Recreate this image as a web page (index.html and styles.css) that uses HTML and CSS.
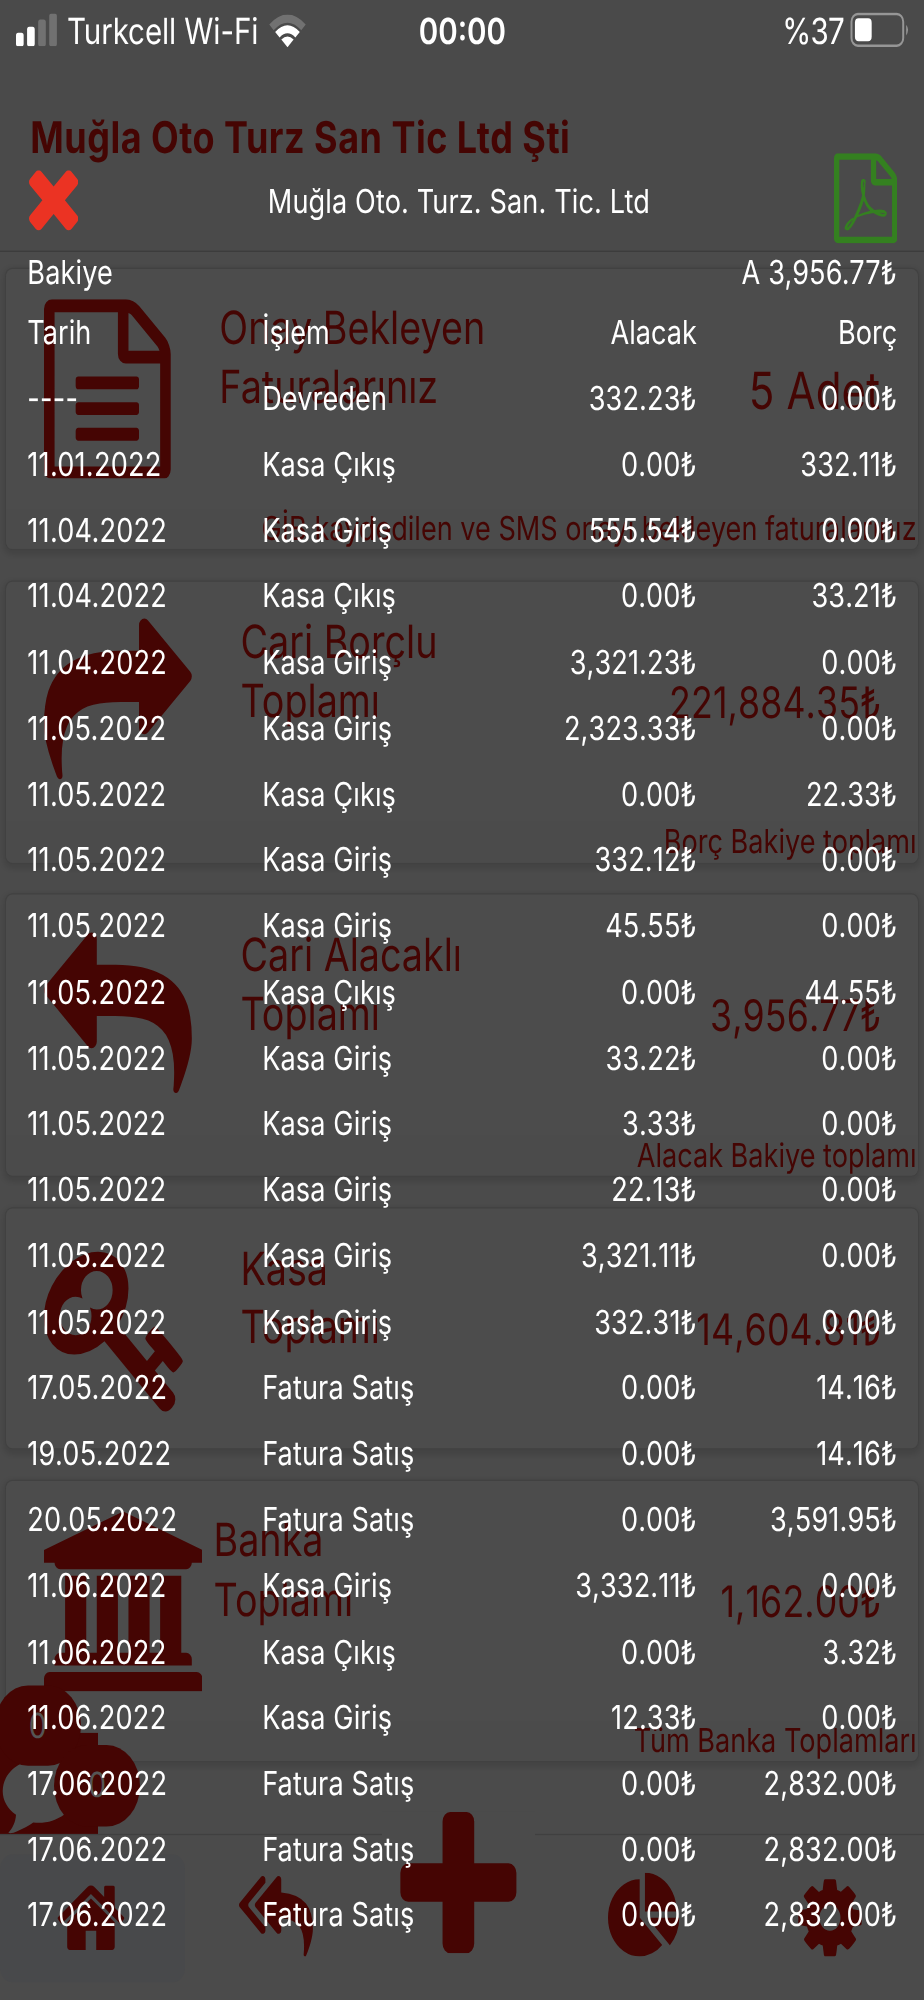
FILE: index.html
```html
<!DOCTYPE HTML>
<html lang="tr">
<head>
	<meta charset="utf-8" />
	<title>Cari Hareketler</title>
	<link rel="stylesheet" href="styles.css">
</head>

<body>
<div class="phone">

	<div class="app">
		<div class="header">
			<h1>Muğla Oto Turz San Tic Ltd Şti</h1>
		</div>

		<div class="content">
			<div class="card card-invoice">
				<div class="card-body">
					<svg class="icon" viewBox="128 0 1536 1792"><path d="M1596 380q28 28 48 76t20 88v1152q0 40-28 68t-68 28h-1344q-40 0-68-28t-28-68v-1600q0-40 28-68t68-28h896q40 0 88 20t76 48zm-444-244v376h376q-10-29-22-41l-313-313q-12-12-41-22zm384 1528v-1024h-416q-40 0-68-28t-28-68v-416h-768v1536h1280zm-1024-864q0-14 9-23t23-9h704q14 0 23 9t9 23v64q0 14-9 23t-23 9h-704q-14 0-23-9t-9-23v-64zm736 224q14 0 23 9t9 23v64q0 14-9 23t-23 9h-704q-14 0-23-9t-9-23v-64q0-14 9-23t23-9h704zm0 256q14 0 23 9t9 23v64q0 14-9 23t-23 9h-704q-14 0-23-9t-9-23v-64q0-14 9-23t23-9h704z"/></svg>
					<h2>Onay Bekleyen<br>Faturalarınız</h2>
					<div class="value">5 Adet</div>
				</div>
				<div class="card-footer">GİB kaydedilen ve SMS onayı bekleyen faturalarınız</div>
			</div>

			<div class="card">
				<div class="card-body">
					<svg class="icon" viewBox="0 0 1792 1792"><path d="M1792 640q0 26-19 45l-512 512q-19 19-45 19t-45-19-19-45v-256h-224q-98 0-175.500 6t-154 21.500-133 42.500-105.500 69.500-80 101-48.500 138.500-17.500 181q0 55 5 123 0 6 2.500 23.500t2.500 26.500q0 15-8.500 25t-23.500 10q-16 0-28-17-7-9-13-22t-13.500-30-10.500-24q-127-285-127-451 0-199 53-333 162-403 875-403h224v-256q0-26 19-45t45-19 45 19l512 512q19 19 19 45z"/></svg>
					<h2>Cari Borçlu<br>Toplamı</h2>
					<div class="value">221,884.35₺</div>
				</div>
				<div class="card-footer">Borç Bakiye toplamı</div>
			</div>

			<div class="card">
				<div class="card-body">
					<svg class="icon" viewBox="0 0 1792 1792"><path d="M1792 1120q0 166-127 451-3 7-10.500 24t-13.500 30-13 22q-12 17-28 17-15 0-23.500-10t-8.500-25q0-9 2.500-26.500t2.500-23.500q5-68 5-123 0-101-17.500-181t-48.500-138.500-80-101-105.500-69.500-133-42.500-154-21.500-175.500-6h-224v256q0 26-19 45t-45 19-45-19l-512-512q-19-19-19-45t19-45l512-512q19-19 45-19t45 19 19 45v256h224q713 0 875 403 53 134 53 333z"/></svg>
					<h2>Cari Alacaklı<br>Toplamı</h2>
					<div class="value">3,956.77₺</div>
				</div>
				<div class="card-footer">Alacak Bakiye toplamı</div>
			</div>

			<div class="card">
				<div class="card-body">
					<svg class="icon" viewBox="0 0 1792 1792"><path d="M832 512q0-80-56-136t-136-56-136 56-56 136q0 42 19 83-41-19-83-19-80 0-136 56t-56 136 56 136 136 56 136-56 56-136q0-42-19-83 41 19 83 19 80 0 136-56t56-136zm851 704q0 17-49 66t-66 49q-9 0-28.500-16t-36.500-33-38.500-40-24.500-26l-96 96 220 220q28 28 28 68 0 42-39 81t-81 39q-40 0-68-28l-671-671q-176 131-365 131-163 0-265.500-102.500t-102.500-265.500q0-160 95-313t248-248 313-95q163 0 265.500 102.500t102.500 265.500q0 189-131 365l355 355 96-96q-3-3-26-24.500t-40-38.500-33-36.500-16-28.500q0-17 49-66t66-49q13 0 23 10 6 6 46 44.500t82 79.500 86.500 86 73 78 28.500 41z"/></svg>
					<h2>Kasa<br>Toplamı</h2>
					<div class="value">14,604.81₺</div>
				</div>
			</div>

			<div class="card card-bank">
				<div class="card-body">
					<svg class="icon" viewBox="-128 0 1920 1792"><path d="M832 0l960 384v128h-128q0 26-20.500 45t-48.500 19h-1526q-28 0-48.500-19t-20.500-45h-128v-128zm-704 640h256v768h128v-768h256v768h128v-768h256v768h128v-768h256v768h59q28 0 48.500 19t20.500 45v64h-1664v-64q0-26 20.500-45t48.500-19h59v-768zm1595 960q28 0 48.500 19t20.500 45v128h-1920v-128q0-26 20.500-45t48.500-19h1782z"/></svg>
					<h2>Banka<br>Toplamı</h2>
					<div class="value">1,162.00₺</div>
				</div>
				<div class="card-footer">Tüm Banka Toplamları</div>
			</div>
		</div>

		<div class="chat">
			<svg viewBox="0 0 40 40"><path d="M17 14.700C8 14.700 1.100 19.500 1.100 25.500c0 3.200 2 6 5.400 7.900C6.300 36 5 38 3.400 39.400c.5.300 2.300.1 3.600-.5 2.300-.8 4.600-1.800 6.500-2.900 5 .4 9-.6 12.600-2.700L33 25.500C33 19.500 26 14.700 17 14.700z"/></svg>
			<span class="badge badge-1">0</span>
			<span class="badge badge-2">0</span>
		</div>

		<div class="tabs">
			<div class="tab active">
				<svg class="tab-icon" viewBox="0 0 1792 1792"><path d="M1472 992v480q0 26-19 45t-45 19h-384v-384h-256v384h-384q-26 0-45-19t-19-45v-480q0-1 .5-3t.5-3l575-474 575 474q1 2 1 6zm223-69l-62 74q-8 9-21 11h-3q-13 0-21-7l-692-577-692 577q-12 8-24 7-13-2-21-11l-62-74q-8-10-7-23.500t11-21.500l719-599q32-26 76-26t76 26l244 204v-195q0-14 9-23t23-9h192q14 0 23 9t9 23v408l219 182q10 8 11 21.500t-7 23.500z"/></svg>
			</div>
			<div class="tab">
				<svg class="tab-icon" viewBox="0 0 1792 1792"><path d="M640 1082v70q0 42-39 59-13 5-25 5-27 0-45-19l-512-512q-19-19-19-45t19-45l512-512q29-31 70-14 39 17 39 59v69l-397 398q-19 19-19 45t19 45zm1152 38q0 58-17 133.500t-38.500 138-48 125-40.500 90.500l-20 40q-8 17-28 17-6 0-9-1-25-8-23-34 43-400-106-565-64-71-170.500-110.500t-267.500-52.500v251q0 42-39 59-13 5-25 5-27 0-45-19l-512-512q-19-19-19-45t19-45l512-512q29-31 70-14 39 17 39 59v262q411 28 599 221 169 173 169 509z"/></svg>
			</div>
			<div class="tab tab-add">
				<svg viewBox="192 128 1408 1408"><path d="M1600 736v192q0 40-28 68t-68 28h-416v416q0 40-28 68t-68 28h-192q-40 0-68-28t-28-68v-416h-416q-40 0-68-28t-28-68v-192q0-40 28-68t68-28h416v-416q0-40 28-68t68-28h192q40 0 68 28t28 68v416h416q40 0 68 28t28 68z"/></svg>
			</div>
			<div class="tab">
				<svg class="tab-icon" viewBox="0 0 1792 1792"><path d="M768 890l546 546q-106 108-247.500 168t-298.500 60q-209 0-385.500-103t-279.500-279.500-103-385.500 103-385.500 279.500-279.500 385.500-103v762zm187 6h773q0 157-60 298.500t-168 247.500zm709-128h-768v-768q209 0 385.500 103t279.500 279.500 103 385.500z"/></svg>
			</div>
			<div class="tab">
				<svg class="tab-icon" viewBox="0 0 1792 1792"><path d="M1152 896q0-106-75-181t-181-75-181 75-75 181 75 181 181 75 181-75 75-181zm512-109v222q0 12-8 23t-20 13l-185 28q-19 54-39 91 35 50 107 138 10 12 10 25t-9 23q-27 37-99 108t-94 71q-12 0-26-9l-138-108q-44 23-91 38-16 136-29 186-7 28-36 28h-222q-14 0-24.500-8.500t-11.500-21.500l-28-184q-49-16-90-37l-141 107q-10 9-25 9-14 0-25-11-126-114-165-168-7-10-7-23 0-12 8-23 15-21 51-66.500t54-70.500q-27-50-41-99l-183-27q-13-2-21-12.500t-8-23.500v-222q0-12 8-23t19-13l186-28q14-46 39-92-40-57-107-138-10-12-10-24 0-10 9-23 26-36 98.500-107.500t94.500-71.500q13 0 26 10l138 107q44-23 91-38 16-136 29-186 7-28 36-28h222q14 0 24.500 8.500t11.500 21.500l28 184q49 16 90 37l142-107q9-9 24-9 13 0 25 10 129 119 165 170 7 8 7 22 0 12-8 23-15 21-51 66.500t-54 70.500q26 50 41 98l183 28q13 2 21 12.500t8 23.500z"/></svg>
			</div>
		</div>
	</div>

	<!-- Hesap ekstresi -->
	<div class="modal">
		<div class="status">
			<div class="status-left">
				<svg class="signal" viewBox="0 0 17 11"><rect x="0" y="6.500" width="3.100" height="4.500" rx=".9"/><rect x="4.500" y="4.500" width="3.100" height="6.500" rx=".9"/><rect class="dim" x="9" y="2" width="3.100" height="9" rx=".9"/><rect class="dim" x="13.500" y="0" width="3.100" height="11" rx=".9"/></svg>
				<span>Turkcell Wi-Fi</span>
				<svg class="wifi" viewBox="0 0 15 11"><path class="dim" d="M.1 3.300Q7.500-3.300 14.900 3.300L13.100 5.200Q7.500 .2 1.900 5.200z"/><path d="M2.500 5.800Q7.500 1.300 12.500 5.800L10.700 7.600Q7.500 4.900 4.300 7.600z"/><path d="M5 8.300Q7.500 6.300 10 8.300L7.500 10.900z"/></svg>
			</div>
			<div class="time">00:00</div>
			<div class="status-right">
				<span>%37</span>
				<svg class="battery" viewBox="0 0 24 12"><rect class="shell" x=".6" y=".6" width="21" height="10.600" rx="2.600"/><rect x="2" y="2" width="6.800" height="7.700" rx="1.500"/><path class="nub" d="M22.800 4.200q1.500 1.600 0 3.600z"/></svg>
			</div>
		</div>

		<div class="modal-head">
			<svg class="close" viewBox="302 366 1188 1188"><path d="M1490 1322q0 40-28 68l-136 136q-28 28-68 28t-68-28l-294-294-294 294q-28 28-68 28t-68-28l-136-136q-28-28-28-68t28-68l294-294-294-294q-28-28-28-68t28-68l136-136q28-28 68-28t68 28l294 294 294-294q28-28 68-28t68 28l136 136q28 28 28 68t-28 68l-294 294 294 294q28 28 28 68z"/></svg>
			<div class="modal-title">Muğla Oto. Turz. San. Tic. Ltd</div>
			<svg class="pdf" viewBox="128 0 1536 1792"><path d="M1596 380q28 28 48 76t20 88v1152q0 40-28 68t-68 28h-1344q-40 0-68-28t-28-68v-1600q0-40 28-68t68-28h896q40 0 88 20t76 48zm-444-244v376h376q-10-29-22-41l-313-313q-12-12-41-22zm384 1528v-1024h-416q-40 0-68-28t-28-68v-416h-768v1536h1280zm-514-593q33 26 84 56 59-7 117-7 147 0 177 49 16 22 2 52 0 1-1 2l-2 2v1q-6 38-71 38-48 0-115-20t-130-53q-221 24-392 83-153 262-242 262-15 0-28-7l-24-12q-1-1-6-5-10-10-6-36 9-40 56-91.500t132-96.500q14-9 23 6 2 2 2 4 52-85 107-197 68-136 104-262-24-82-30.500-159.500t6.500-127.500q11-40 42-40h22q23 0 35 15 18 21 9 68-2 6-4 8 1 3 1 8v30q-2 123-14 192 55 164 146 238zm-576 411q52-24 137-158-51 40-87.500 84t-49.500 74zm398-920q-15 42-2 132 1-7 7-44 0-3 7-43 1-4 4-8-1-1-1-2-1-2-1-3-1-22-13-36 0 1-1 2v2zm-124 661q135-54 284-81-2-1-13-9.500t-16-13.500q-76-67-127-176-27 86-83 197-30 56-45 83zm646-16q-24-24-140-24 76 28 124 28 14 0 18-1 0-1-2-3z"/></svg>
		</div>

		<div class="balance"><span>Bakiye</span><span>A 3,956.77₺</span></div>
		<table class="moves">
			<tr><th>Tarih</th><th>İşlem</th><th>Alacak</th><th>Borç</th></tr>
			<tr><td>----</td><td>Devreden</td><td>332.23₺</td><td>0.00₺</td></tr>
			<tr><td>11.01.2022</td><td>Kasa Çıkış</td><td>0.00₺</td><td>332.11₺</td></tr>
			<tr><td>11.04.2022</td><td>Kasa Giriş</td><td>555.54₺</td><td>0.00₺</td></tr>
			<tr><td>11.04.2022</td><td>Kasa Çıkış</td><td>0.00₺</td><td>33.21₺</td></tr>
			<tr><td>11.04.2022</td><td>Kasa Giriş</td><td>3,321.23₺</td><td>0.00₺</td></tr>
			<tr><td>11.05.2022</td><td>Kasa Giriş</td><td>2,323.33₺</td><td>0.00₺</td></tr>
			<tr><td>11.05.2022</td><td>Kasa Çıkış</td><td>0.00₺</td><td>22.33₺</td></tr>
			<tr><td>11.05.2022</td><td>Kasa Giriş</td><td>332.12₺</td><td>0.00₺</td></tr>
			<tr><td>11.05.2022</td><td>Kasa Giriş</td><td>45.55₺</td><td>0.00₺</td></tr>
			<tr><td>11.05.2022</td><td>Kasa Çıkış</td><td>0.00₺</td><td>44.55₺</td></tr>
			<tr><td>11.05.2022</td><td>Kasa Giriş</td><td>33.22₺</td><td>0.00₺</td></tr>
			<tr><td>11.05.2022</td><td>Kasa Giriş</td><td>3.33₺</td><td>0.00₺</td></tr>
			<tr><td>11.05.2022</td><td>Kasa Giriş</td><td>22.13₺</td><td>0.00₺</td></tr>
			<tr><td>11.05.2022</td><td>Kasa Giriş</td><td>3,321.11₺</td><td>0.00₺</td></tr>
			<tr><td>11.05.2022</td><td>Kasa Giriş</td><td>332.31₺</td><td>0.00₺</td></tr>
			<tr><td>17.05.2022</td><td>Fatura Satış</td><td>0.00₺</td><td>14.16₺</td></tr>
			<tr><td>19.05.2022</td><td>Fatura Satış</td><td>0.00₺</td><td>14.16₺</td></tr>
			<tr><td>20.05.2022</td><td>Fatura Satış</td><td>0.00₺</td><td>3,591.95₺</td></tr>
			<tr><td>11.06.2022</td><td>Kasa Giriş</td><td>3,332.11₺</td><td>0.00₺</td></tr>
			<tr><td>11.06.2022</td><td>Kasa Çıkış</td><td>0.00₺</td><td>3.32₺</td></tr>
			<tr><td>11.06.2022</td><td>Kasa Giriş</td><td>12.33₺</td><td>0.00₺</td></tr>
			<tr><td>17.06.2022</td><td>Fatura Satış</td><td>0.00₺</td><td>2,832.00₺</td></tr>
			<tr><td>17.06.2022</td><td>Fatura Satış</td><td>0.00₺</td><td>2,832.00₺</td></tr>
			<tr><td>17.06.2022</td><td>Fatura Satış</td><td>0.00₺</td><td>2,832.00₺</td></tr>
		</table>
	</div>

</div>
</body>
</html>
```
FILE: styles.css
```css
* {
	margin: 0;
	padding: 0;
	box-sizing: border-box;
}

html, body {
	width: 924px;
	height: 2000px;
	overflow: hidden;
	background-color: #4b4b4b;
}

/* 375x667 screen stretched over the page */
.phone {
	position: relative;
	width: 375px;
	height: 667px;
	zoom: 2.464;
	transform: scaleY(1.21692);
	transform-origin: 0 0;
	font-family: Inter, "Noto Sans", sans-serif;
	font-size: 11px;
	text-rendering: geometricPrecision;
	white-space: nowrap;
}

svg {
	display: block;
	flex: none;
	fill: currentColor;
}

/* App under the modal */
.app {
	display: flex;
	flex-direction: column;
	height: 667px;
	color: #450503;
}

.header {
	height: 83.8px;
	padding: 36.2px 0 0 12.300px;
	background-color: #4a4a4a;
	box-shadow: 0 .4px 0 #3b3b3b;
}

h1 {
	font-size: 14.6px;
	line-height: 20px;
	font-weight: 700;
	letter-spacing: .2px;
}

.content {
	flex: 1;
	padding: 5.700px 2.300px 0 2.500px;
}

.card {
	margin-bottom: 10.8px;
	background-color: #4c4c4c;
	border-radius: 2.500px;
	box-shadow: 0 0 0 .4px #414141, 0 1px 2px 1px rgba(0, 0, 0, .1);
}

.card-body {
	display: flex;
	align-items: flex-start;
	height: 80px;
	padding: 10.2px 15px 0 15.300px;
}

.card .icon {
	height: 60px;
	margin-right: 19.8px;
}

.card-bank .icon {
	margin-right: 4.6px;
}

h2 {
	padding-top: .2px;
	font-size: 15.3px;
	line-height: 19.6px;
	font-weight: 400;
}

.value {
	margin-left: auto;
	padding-top: 20.2px;
	font-size: 14.5px;
	line-height: 20px;
	letter-spacing: .05px;
	font-kerning: none;
}

.card-invoice .value {
	padding-top: 20.9px;
	padding-right: .5px;
	font-size: 17.1px;
}

.card-footer {
	height: 13.7px;
	padding-right: .7px;
	background-color: #4b4b4b;
	border-radius: 0 0 2.500px 2.500px;
	line-height: 13.9px;
	text-align: right;
}

/* Chat button */
.chat {
	position: absolute;
	left: 0;
	top: 572px;
	width: 40px;
	height: 39.8px;
	background: linear-gradient(#450503, #450503) 0 6px / 39.800px 34px no-repeat;
}

.chat svg {
	width: 40px;
	height: 40px;
	color: #4c4c4c;
}

.badge {
	position: absolute;
	width: 35px;
	height: 27px;
	border-radius: 14px;
	background-color: #450503;
	color: #555;
	font-size: 11.5px;
	line-height: 27.5px;
	text-align: center;
}

.badge-1 {
	left: -2.200px;
	top: -10px;
}

.badge-2 {
	left: 21.900px;
	top: 10px;
}

/* Bottom menu */
.tabs {
	display: flex;
	height: 55px;
	padding-top: 6.600px;
	box-shadow: 0 -.4px 0 #404040;
	background-color: #4b4b4b;
}

.tab {
	display: flex;
	justify-content: center;
	flex: 1;
	height: 42.400px;
	padding: 6px 1.100px 0 0;
}

.tab.active {
	border-radius: 5px;
	background-color: #48494b;
}

.tab-icon {
	width: 30px;
	height: 30px;
}

.tab-add svg {
	width: 62px;
	height: 47.1px;
	margin: -20.3px 0 0 -2px;
	background-color: #4b4b4b;
}

/* Modal */
.modal {
	position: absolute;
	left: 0;
	top: 0;
	width: 375px;
	height: 667px;
	color: #fff;
}

.status {
	display: grid;
	grid-template-columns: 1fr auto 1fr;
	height: 56.400px;
	padding: .8px 6px 0 6.3px;
	font-size: 12px;
	line-height: 20px;
}

.status-left,
.status-right {
	display: flex;
	align-items: flex-start;
}

.status-left {
	letter-spacing: -.04px;
}

.status-right {
	justify-content: flex-end;
	letter-spacing: -.3px;
}

.dim {
	opacity: .22;
}

.signal {
	width: 17px;
	height: 11px;
	margin: 3.600px 3.900px 0 0;
}

.wifi {
	width: 15px;
	height: 11px;
	margin: 3.900px 0 0 4.200px;
}

.battery {
	width: 24px;
	height: 12px;
	margin: 3.100px 0 0 2.500px;
}

.battery .shell {
	fill: none;
	stroke: #969696;
	stroke-width: .8;
}

.battery .nub {
	fill: #969696;
}

.time {
	font-weight: 600;
}

.modal-head {
	display: grid;
	grid-template-columns: 26px 1fr 26px;
	height: 23.7px;
	padding: 0 10.700px 0 11.800px;
	line-height: 22px;
}

.modal-title {
	padding-right: 3.600px;
	letter-spacing: .05px;
	text-align: center;
}

.close {
	width: 20px;
	height: 20px;
	margin-top: .6px;
	color: #eb3323;
}

.pdf {
	width: 25.700px;
	height: 30px;
	margin-top: -5.400px;
	color: #348020;
}

.balance {
	display: flex;
	justify-content: space-between;
	height: 19.950px;
	padding: 0 11px 0 11.100px;
	line-height: 22px;
	letter-spacing: .05px;
}

/* Hareketler */
.moves {
	width: 353px;
	margin-left: 11.100px;
	border-collapse: collapse;
	table-layout: fixed;
	line-height: 22px;
}

.moves th,
.moves td {
	height: 22px;
	font-weight: 400;
	text-align: left;
}

.moves td:nth-child(1) {
	letter-spacing: .1px;
}

.moves td:nth-child(2) {
	letter-spacing: .05px;
}

.moves th:nth-child(1) {
	width: 95.300px;
}

.moves th:nth-child(2) {
	width: 106.400px;
}

.moves th:nth-child(3) {
	width: 70px;
}

.moves th:nth-child(n+3),
.moves td:nth-child(n+3) {
	text-align: right;
}

.moves td:nth-child(n+3) {
	letter-spacing: .05px;
	font-kerning: none;
}
```
